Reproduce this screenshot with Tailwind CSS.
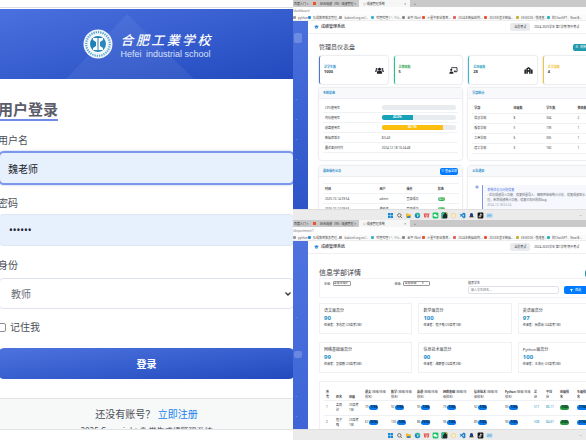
<!DOCTYPE html>
<html lang="zh-CN">
<head>
<meta charset="utf-8">
<meta name="viewport" content="width=device-width, initial-scale=1">
<title>成绩管理系统</title>
<script src="https://cdn.jsdelivr.net/npm/@tailwindcss/browser@4"></script>
</head>
<body class="bg-white font-['Noto_Sans','Noto_Sans_CJK_SC',sans-serif]">

<svg class="hidden" aria-hidden="true">
  <symbol id="cap" viewBox="0 0 20 16"><path fill="#1a80d0" d="M10 1 0 5l10 4 10-4zM4 8v4c3 3 9 3 12 0V8l-6 3z"/></symbol>
  <symbol id="users" viewBox="0 0 28 20"><g fill="#1f2328"><circle cx="14" cy="6" r="4.5"/><circle cx="5" cy="5" r="3"/><circle cx="23" cy="5" r="3"/><path d="M6 20v-4c0-3 3-5 5-5h6c2 0 5 2 5 5v4zM0 14v-2c0-2 1-3 3-3h4l1 1c-2 1-3 2-3 4zM28 14v-2c0-2-1-3-3-3h-4l-1 1c2 1 3 2 3 4z"/></g></symbol>
  <symbol id="teacher" viewBox="0 0 26 22"><path fill="none" stroke="#1f2328" stroke-width="2.6" d="M7 5V2h17v13H14"/><path fill="#1f2328" d="M15 11h5v4h-5z"/><circle cx="6" cy="9" r="3.4" fill="#1f2328"/><path fill="#1f2328" d="M0 21c0-5 2-7 6-7s7 2 7 7z"/></symbol>
  <symbol id="school" viewBox="0 0 26 22"><path fill="#1f2328" d="M13 0 6 5v16h5v-6h4v6h5V5zM0 9l5-2v14H0zM26 9l-5-2v14h5z"/><circle cx="13" cy="8" r="2.4" fill="#fff"/></symbol>
  <symbol id="funnel" viewBox="0 0 12 12"><path fill="#fff" d="M0 0h12L7.500 6v6L4.500 10V6z"/></symbol>
</svg>

<main class="grid h-screen grid-cols-2 grid-rows-1 overflow-hidden">

  <!-- Sign-in page -->
  <section class="flex flex-col overflow-hidden bg-white text-[10px] leading-[14px] text-[#4b4f57]">
    <div class="h-2 shrink-0 border-b border-[#dcdde3]"></div>
    <header class="relative mt-px flex h-[70px] shrink-0 items-center justify-center gap-2 bg-linear-to-br from-[#4b70df] to-[#224abe]">
      <svg class="absolute inset-y-0 left-[66px] h-full w-[128px]" viewBox="0 0 128 70" aria-hidden="true"><path d="M61 5 128 70H0z" fill="#fff" opacity=".06"/></svg>
      <svg class="size-[30px]" viewBox="0 0 30 30" role="img" aria-label="校徽">
        <circle cx="15" cy="15" r="14.500" fill="#edf6fb"/>
        <circle cx="15" cy="15" r="11.800" fill="none" stroke="#5fa2cf" stroke-width="2.200" stroke-dasharray="1.300 1"/>
        <circle cx="15" cy="15" r="9" fill="#fff"/>
        <circle cx="15" cy="15" r="8" fill="#2080b8"/>
        <path fill="#fff" d="M10 9h10v2l-3 2v4l3 2v2H10v-2l3-2v-4l-3-2z"/>
        <path stroke="#2080b8" d="M15 9v12"/>
      </svg>
      <div class="w-[90px] pt-0.5 text-white">
        <p class="flex justify-between font-['Noto_Sans_CJK_SC',sans-serif] text-[13px] leading-[18px] font-medium italic"><span>合</span><span>肥</span><span>工</span><span>業</span><span>学</span><span>校</span></p>
        <p class="flex justify-between font-['Liberation_Sans',sans-serif] text-[9px] leading-[10px] whitespace-nowrap text-[#d6e0fa]"><span>Hefei</span><span>industrial school</span></p>
      </div>
    </header>
    <form class="-mx-0.5 flex flex-col pt-5">
      <h1 class="self-start border-b-2 border-[#6f8be6] text-[15px] leading-5 font-bold text-[#5a5c69]">用户登录</h1>
      <label for="user" class="mt-3">用户名</label>
      <input id="user" value="魏老师" class="mt-1 h-[34px] rounded-md border-2 border-[#7f97ea] bg-[#e7f1fe] px-2 text-[#20242b] shadow-[0_0_2px_#9db0f0]">
      <label for="pass" class="mt-[11px]">密码</label>
      <input id="pass" type="password" value="123456" class="mt-1 h-8 rounded-md border border-[#dfe5f5] bg-[#e7f1fe] px-2.5 text-[10px] text-[#20242b]">
      <label for="role" class="mt-3">身份</label>
      <div class="relative mt-1.5 flex">
        <select id="role" class="h-[31px] w-full appearance-none rounded-md border border-[#dfe2f2] bg-white px-3 text-[#6a6d78]"><option>教师</option></select>
        <svg class="pointer-events-none absolute top-3.5 right-1 h-1 w-1.5" viewBox="0 0 6 4"><path d="m.5.5 2.500 2.500L5.500.5" fill="none" stroke="#333" stroke-width="1.300"/></svg>
      </div>
      <label class="mt-[11px] flex items-center gap-1"><input type="checkbox" class="-ml-px size-[9px] appearance-none rounded-[2px] border border-[#8b8e96] bg-white">记住我</label>
      <button type="button" class="mt-[14px] h-[31px] rounded-md bg-linear-to-br from-[#4e73df] to-[#224abe] font-bold text-white">登录</button>
    </form>
    <footer class="mt-[19px] h-[32px] shrink-0 overflow-hidden border-y border-[#e2e3e6] bg-[#f7f8f8] pt-2 text-center">
      <p>还没有账号？ <a href="#" class="text-[#1683ee]">立即注册</a></p>
      <p class="mt-1 text-[8px] leading-3">2025 Copyright © 学生成绩管理系统</p>
    </footer>
  </section>

  <div class="grid grid-cols-1 grid-rows-2 overflow-hidden text-[3px] leading-[4px] text-[#3b3e45]">

    <!-- Administrator dashboard -->
    <section class="flex min-h-0 flex-col overflow-hidden">
      <div data-browser="/dashboard" class="shrink-0"></div>
      <div class="flex min-h-0 w-[110%] flex-1 overflow-hidden">
        <aside class="flex w-[15px] shrink-0 flex-col items-start bg-linear-to-b from-[#4a70dd] to-[#2d55c8]">
          <div class="mt-3 ml-px h-2.5 w-2 rounded-xs bg-white/20"></div>
          <nav class="mt-[54px] flex flex-col gap-4 pl-0.5 text-white/70"><a href="#">⌄</a><a href="#">⌄</a><a href="#">⌄</a><a href="#">⌄</a></nav>
        </aside>
        <div class="min-w-0 flex-1">
          <div data-topbar></div>
          <div class="flex flex-col pr-1 pl-[11px]">
            <div class="mt-2 flex h-[10px] items-center justify-between">
              <h2 class="text-[6px] leading-[10px]">管理员仪表盘</h2>
              <button type="button" class="mr-2.5 flex h-[7px] w-7 items-center gap-0.5 rounded-xs bg-[#2299ac] px-0.5 text-white"><span>⊕</span>刷新数据</button>
            </div>
            <div class="mt-1 grid grid-cols-4 gap-1.5">
              <article class="flex h-7 items-center justify-between rounded-xs border-l border-[#4e73df] bg-white pr-1 pl-1 shadow-[0_0_2px_#b9bdc9]"><div><h3 class="font-bold text-[#2a8fc9]">总学生数</h3><p class="text-[4px] leading-[6px] font-bold">1000</p></div><svg class="h-[7px] w-[9px]"><use href="#users"/></svg></article>
              <article class="flex h-7 items-center justify-between rounded-xs border-l border-[#1cc88a] bg-white pr-1 pl-1 shadow-[0_0_2px_#b9bdc9]"><div><h3 class="font-bold text-[#35a853]">总教师数</h3><p class="text-[4px] leading-[6px] font-bold">5</p></div><svg class="h-[7px] w-[9px]"><use href="#teacher"/></svg></article>
              <article class="flex h-7 items-center justify-between rounded-xs border-l border-[#36b9cc] bg-white pr-1 pl-1 shadow-[0_0_2px_#b9bdc9]"><div><h3 class="font-bold text-[#2aa5bd]">总班级数</h3><p class="text-[4px] leading-[6px] font-bold">28</p></div><svg class="h-[7px] w-[9px]"><use href="#school"/></svg></article>
              <article class="flex h-7 items-center justify-between rounded-xs border-l border-[#f6c23e] bg-white pr-1 pl-1 shadow-[0_0_2px_#b9bdc9]"><div><h3 class="font-bold text-[#efc02c]">总学部数</h3><p class="text-[4px] leading-[6px] font-bold">4</p></div></article>
            </div>
            <div class="mt-1 grid grid-cols-2 gap-x-1.5 gap-y-1.5">
              <article class="h-[72px] rounded-xs bg-white shadow-[0_0_2px_#b9bdc9]">
                <h3 class="flex h-[11px] items-center border-b border-[#eceef2] bg-[#f8f9fb] px-1 font-bold text-[#2a8fc9]">系统状态</h3>
                <dl class="mx-1 mt-1 grid grid-cols-[42%_1fr] [&>*]:flex [&>*]:h-[10px] [&>*]:items-center [&>*]:border-b [&>*]:border-[#f1f2f4] [&>*]:px-0.5">
                  <dt>CPU使用率</dt><dd><div class="h-[5px] w-full rounded-xs bg-[#e9ecef]"></div></dd>
                  <dt>内存使用率</dt><dd><div class="h-[5px] w-full rounded-xs bg-[#e9ecef]"><div class="h-[5px] rounded-l-xs bg-[#17a2b8] text-center leading-[5px] font-bold text-white" style="width:42%">42.0%</div></div></dd>
                  <dt>磁盘使用率</dt><dd><div class="h-[5px] w-full rounded-xs bg-[#e9ecef]"><div class="h-[5px] rounded-l-xs bg-[#fcbf10] text-center leading-[5px] font-bold text-white" style="width:82%">82.1%</div></div></dd>
                  <dt>数据库版本</dt><dd>8.0.43</dd>
                  <dt>最近备份时间</dt><dd>2024-12-18 10:24:48</dd>
                </dl>
              </article>
              <article class="h-[72px] rounded-xs bg-white shadow-[0_0_2px_#b9bdc9]">
                <h3 class="flex h-[11px] items-center border-b border-[#eceef2] bg-[#f8f9fb] px-1 font-bold text-[#2a8fc9]">学部统计</h3>
                <table class="mx-1 mt-1 w-[95%] table-fixed text-left [&_tr]:h-[10px] [&_tr]:border-b [&_tr]:border-[#f1f2f4] [&_td]:pl-0.5 [&_th]:pl-0.5">
                  <tr><th class="w-[29%]">学部</th><th class="w-[24%]">班级数</th><th class="w-[23%]">学生数</th><th>教师数</th></tr>
                  <tr><td>信息学部</td><td>8</td><td>334</td><td>2</td></tr>
                  <tr><td>服务学部</td><td>5</td><td>199</td><td>1</td></tr>
                  <tr><td>工商学部</td><td>6</td><td>305</td><td>1</td></tr>
                  <tr><td>建工学部</td><td>3</td><td>160</td><td>1</td></tr>
                </table>
              </article>
              <article class="rounded-xs bg-white shadow-[0_0_2px_#b9bdc9]">
                <header class="flex h-[11px] items-center justify-between border-b border-[#eceef2] bg-[#f8f9fb] px-1"><h3 class="font-bold text-[#2a8fc9]">最新操作记录</h3><button type="button" class="h-[7px] w-[18px] rounded-xs bg-[#007bff] text-white">≡ 查看全部</button></header>
                <table class="mx-1 mt-1.5 w-[95%] table-fixed text-left [&_tr]:h-[10px] [&_tr]:border-y [&_tr]:border-[#f1f2f4] [&_td]:pl-0.5 [&_th]:pl-0.5">
                  <tr><th class="w-[40%]">时间</th><th class="w-[20%]">用户</th><th class="w-[23%]">操作</th><th>状态</th></tr>
                  <tr><td>2025-10-14 09:54</td><td>admin</td><td>登录成功</td><td><span class="block w-[7px] rounded-xs bg-[#28a745] text-center text-white">成功</span></td></tr>
                  <tr><td>2025-10-14 09:53</td><td>魏老师</td><td>登录成功</td><td><span class="block w-[7px] rounded-xs bg-[#28a745] text-center text-white">成功</span></td></tr>
                </table>
              </article>
              <article class="rounded-xs bg-white shadow-[0_0_2px_#b9bdc9]">
                <h3 class="flex h-[11px] items-center border-b border-[#eceef2] bg-[#f8f9fb] px-1 font-bold text-[#2a8fc9]">公告通知</h3>
                <div class="mt-2 ml-2 flex gap-1">
                  <span class="mt-px size-0.5 rounded-full bg-[#4e73df] outline outline-[#c9d4f6]"></span>
                  <div class="h-[30px] flex-1 border-l border-[#7f97e0] bg-[#f6f8fe] px-1 pt-[3px] leading-[5px]">
                    <h4 class="text-[#4e73df]">系统优化与问题修复</h4>
                    <p class="text-[#666a72]">- 优化成绩导入功能、修复批量导入、精确到班级统计分析、修复成绩显示、完善权限管理，新增成绩统计功能，修复已知问题和bug</p>
                    <time class="block text-[#9a9da5]">2024-12-18 02:24</time>
                  </div>
                </div>
              </article>
            </div>
          </div>
        </div>
      </div>
      <div data-taskbar class="shrink-0"></div>
    </section>

    <!-- Department details -->
    <section class="flex min-h-0 flex-col overflow-hidden">
      <div data-browser="/department/1" class="shrink-0"></div>
      <div class="flex min-h-0 w-[110%] flex-1 overflow-hidden">
        <aside class="flex w-[15px] shrink-0 flex-col items-start bg-linear-to-b from-[#4e73df] to-[#3e65d6]">
          <nav class="mt-[74px] flex flex-col pl-0.5 text-white/70"><a href="#">⌄</a></nav>
          <div class="mt-8 ml-px h-[7px] w-2 rounded-xs bg-white/20"></div>
          <nav class="mt-9 flex flex-col gap-4 pl-0.5 text-white/70"><a href="#">⌄</a><a href="#">⌄</a></nav>
        </aside>
        <div class="min-w-0 flex-1">
          <div data-topbar></div>
          <div class="flex flex-col pr-1 pl-[11px]">
            <div class="mt-[14px] flex h-[10px] items-center justify-between">
              <h2 class="text-[7px] leading-[10px]">信息学部详情</h2>
              <button type="button" class="mr-2.5 h-[7px] w-4 rounded-xs bg-[#2299ac] text-white">返回</button>
            </div>
            <form class="grid h-5 grid-cols-[25%_26%_1fr] items-start border border-[#f1f2f5] px-1 pt-0.5">
              <label class="flex items-center gap-0.5">年级: <select class="h-[5px] w-[18px] appearance-none rounded-[1px] border border-[#999] leading-[3px]"><option>全部年级▾</option></select></label>
              <label class="flex items-center gap-0.5">班级: <select class="h-[5px] w-[27px] appearance-none rounded-[1px] border border-[#999] leading-[3px]"><option>全部班级　　▾</option></select></label>
              <div class="grid grid-cols-[91px_1fr] gap-x-[5px]">
                <label for="search" class="col-span-2">搜索学生</label>
                <input id="search" placeholder="输入学生姓名..." class="mt-px h-2 rounded-xs border border-[#dfe2e8] px-0.5 placeholder:text-[#777b84]">
                <button type="button" class="mt-px flex h-2 items-center gap-0.5 rounded-xs bg-[#007bff] pl-1.5 text-white"><svg class="size-[3px]"><use href="#funnel"/></svg>筛选</button>
              </div>
            </form>
            <div data-scores class="mt-[5px] grid grid-cols-3 gap-x-1.5 gap-y-2"></div>
            <div class="mt-2 border border-[#f0f1f4] px-1 pt-1.5">
              <table class="w-full table-fixed text-left [&_td]:h-[15px] [&_td]:pl-0.5 [&_th]:h-3 [&_th]:pl-0.5 [&_tr]:border-b [&_tr]:border-[#f0f1f4]">
                <colgroup><col class="w-[10px]"><col class="w-[13px]"><col class="w-[16px]"><col class="w-[26px]"><col class="w-[26px]"><col class="w-[26px]"><col class="w-[31px]"><col class="w-[31px]"><col class="w-[29px]"><col class="w-[12px]"><col class="w-[14px]"><col class="w-[17px]"><col></colgroup>
                <thead><tr class="align-bottom leading-[5px]"><th>序<br>号</th><th>姓名</th><th>班级</th><th>语文 <span class="font-normal">(班级/年级<br>排名)</span></th><th>数学 <span class="font-normal">(班级/年级<br>排名)</span></th><th>英语 <span class="font-normal">(班级/年级<br>排名)</span></th><th>网络基础 <span class="font-normal">(班级/年<br>级排名)</span></th><th>信息技术 <span class="font-normal">(班级/年<br>级排名)</span></th><th>Python <span class="font-normal">(班级/年级<br>排名)</span></th><th>总<br>分</th><th>平均<br>分</th><th>班级排<br>名</th><th>年级排<br>名</th></tr></thead>
                <tbody data-students></tbody>
              </table>
            </div>
          </div>
        </div>
      </div>
      <div data-taskbar class="shrink-0"></div>
    </section>
  </div>
</main>

<script>
const fill = (selector, html) => document.querySelectorAll(selector).forEach(el => { el.innerHTML = typeof html === 'function' ? html(el) : html; });

const bookmarks = [['#999','python'],['#1c8fe0','弘成教育教务管理...'],['#999','kubectl.org.cn/...'],['#35b7c2','哔哩哔哩 ( °- °)つ...'],['#888','金字 (Net)'],['#e8502e','火星牛职业教育...'],['#e06060','2024年数据结构...'],['#e8502e','2023年基本数据...'],['#c5b22b','KEGOOS · 快速查...'],['#22b5c0','的ChatGPT、New B...']];
fill('[data-browser]', el => `
  <div class="flex h-[7px] items-center bg-[#c9c9c9] text-[#333]">
    <span class="w-4 pl-px">百度入门 ×</span><span class="flex w-[50px] items-center gap-1 overflow-hidden whitespace-nowrap"><i class="ml-1 size-[3px] shrink-0 bg-[#f0512d]"></i>综合成绩（99）成绩管理 ×</span>
    <span class="flex h-full w-[51px] items-center justify-between bg-[#f6f6f6] px-1"><span>◎ 成绩管理系统</span><span>×</span></span><span class="ml-1">+</span>
  </div>
  <div class="h-2 bg-[#fdfdfd] text-[#777] leading-[8px]">${el.dataset.browser}</div>
  <div class="grid h-1.5 grid-cols-[15fr_31fr_32fr_31fr_20fr_31fr_31fr_32fr_31fr_39fr] items-center overflow-hidden border-b border-[#ededed] bg-[#fafafa] whitespace-nowrap text-[#555]">
    ${bookmarks.map(([c, t]) => `<span class="flex items-center gap-0.5"><i class="size-[3px] shrink-0 rounded-[1px]" style="background:${c}"></i>${t}</span>`).join('')}
  </div>`);

fill('[data-topbar]', `
  <div class="flex h-[13px] items-center border-b border-[#eff0f3] pl-1.5">
    <svg class="h-1 w-[5px]"><use href="#cap"/></svg><b class="ml-0.5 text-[4px] font-medium">成绩管理系统</b>
    <span class="ml-auto rounded-xs bg-[#e9ebef] px-1 py-0.5">当前考试</span>
    <span class="mr-9 ml-1 whitespace-nowrap">2024-2025学年 第1学期 期中考试</span>
  </div>`);

const apps = [
  '<path fill="#1688d8" d="M1 1h6v6H1zM8 1h6v6H8zM1 8h6v6H1zM8 8h6v6H8z"/>',
  '<circle cx="7" cy="7" r="4.500" fill="none" stroke="#555" stroke-width="2"/><path stroke="#555" stroke-width="2" d="m10 10 4 4"/>',
  '<path fill="#f2bb32" d="M1 2h5l2 2h6v10H1z"/><path fill="#2c86cc" d="M4 9h8v5H4z"/>',
  '<circle cx="7.500" cy="7.500" r="7" fill="#178bc4"/><path fill="#45c98b" d="M3 4c4-5 11-2 11 4H9z"/><circle cx="8" cy="9" r="2" fill="#fff"/>',
  '<path fill="#e34a43" d="M0 2h15l-2 11H9L7.500 8 6 13H2z"/><path stroke="#fff" d="m3 4 3 6 2-5 2 5 2-6" fill="none"/>',
  '<rect width="15" height="15" rx="3" fill="#18c566"/><circle cx="6" cy="7" r="3.500" fill="#fff"/><circle cx="10" cy="9" r="3" fill="#e4f7eb"/>',
  '<rect width="15" height="15" rx="2" fill="#202829"/><path fill="#20c58c" d="M0 0h9L3 8v7H0z"/><path fill="#e6df45" d="M10 0h5v6z"/>',
  '<circle cx="7.500" cy="7.500" r="7" fill="#efdca4"/><circle cx="7.500" cy="8" r="3.500" fill="#fff6da"/>',
  '<path fill="#1b85ca" d="M11 0l4 2v11l-4 2-7-6-3 2-1-1 3-3-3-3 1-1 3 2zm0 4L7 7.500 11 11z"/>',
  '<path fill="#263c78" d="M7.500 1c4 0 4 4 4 7l2 4h-12l2-4c0-3 0-7 4-7z"/><path fill="#e8a63a" d="M4 12h7v2H4z"/>',
  '<rect width="15" height="15" rx="2" fill="#151515"/><path stroke="#fff" stroke-width="2" fill="none" d="M8 3v7a2 2 0 1 1-2-2M8 3c0 2 2 3 4 3"/>',
  '<rect y="2" width="15" height="11" rx="1" fill="#9bd1ee"/><path stroke="#377ba8" fill="none" d="m2 10 3-4 3 3 4-4"/>'];
fill('[data-taskbar]', `
  <div class="flex h-[11px] items-center gap-1 border-t border-[#dedede] bg-[#ebebeb] pl-[95px]">
    ${apps.map(a => `<svg class="size-[5px] shrink-0 overflow-visible" viewBox="1 1 13 13">${a}</svg>`).join('')}
    <span class="mr-1 ml-auto">︿</span>
  </div>`);

const scores = [['语文最高分','90','任课者：李志超 (23高考2班)'],['数学最高分','100','任课者：程子翰 (23高考1班)'],['英语最高分','97','任课者：杨景茹 (24高考1班)'],['网络基础最高分','99','任课者：吴德鹏 (23高考3班)'],['信息技术最高分','90','任课者：魏静蕾 (24高考2班)'],['Python最高分','100','任课者：王海元 (23高考2班)']];
fill('[data-scores]', scores.map(([t, n, d]) => `
  <article class="h-[31px] border border-[#f0f1f4] px-1 pt-1">
    <h3 class="text-[4px] leading-[6px]">${t}</h3>
    <p class="text-[6px] leading-[9px] font-bold text-[#1c8dc9]">${n}</p>
    <p class="leading-[5px]">${d}</p>
  </article>`).join(''));

const students = [
  [1,'孟雨欣','23高考1班',[['79','1/60'],['92','1/60'],['95','1/60'],['79','1/60'],['92','1/60'],['90','1/60']],'517','86.17','1/60','1/164'],
  [2,'程子翰','23高考1班',[['67','16/60'],['100','1/60'],['86','13/60'],['96','1/60'],['89','1/60'],['90','1/60']],'508','84.67','2/60','2/164']];
fill('[data-students]', students.map(([i, n, c, marks, sum, avg, rank, year]) => `
  <tr class="leading-[5px]"><td>${i}</td><td>${n.slice(0, 2)}<br>${n.slice(2)}</td><td>${c.slice(0, 4)}<br>${c.slice(4)}</td>
  ${marks.map(([m, r]) => `<td><span class="flex items-center gap-px">${m}<b class="w-[9px] rounded-full bg-[#0878ea] text-center text-[#123]">${r}</b></span></td>`).join('')}
  <td class="text-[#2492b8]">${sum}</td><td class="text-[#2492b8]">${avg}</td>
  <td><b class="block w-[9px] rounded-full bg-[#28963f] text-center text-[#123]">${rank}</b></td>
  <td><b class="block w-[12px] rounded-full bg-[#0878ea] text-center text-[#123]">${year}</b></td></tr>`).join(''));
</script>
</body>
</html>
